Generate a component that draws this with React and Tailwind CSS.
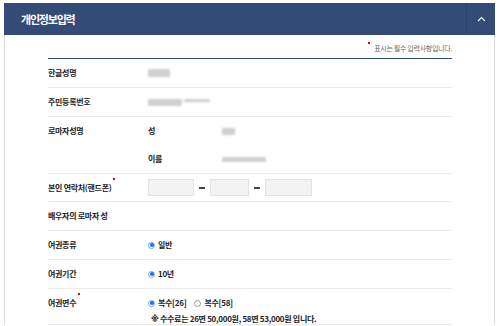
import React from 'react';

const Blur = ({ w, h = 7, className = '' }) => (
  <span
    className={`inline-block rounded-[1px] bg-[#cfcfcf] blur-[1.3px] ${className}`}
    style={{ width: w, height: h }}
  />
);

const Radio = ({ checked, label }) => (
  <span className="flex items-center gap-[3px]">
    {checked ? (
      <span className="flex h-[7px] w-[7px] items-center justify-center rounded-full border border-[#7aa6f2] bg-white">
        <span className="h-[4px] w-[4px] rounded-full bg-[#1a6ef0]" />
      </span>
    ) : (
      <span className="h-[7px] w-[7px] rounded-full border border-[#999] bg-white" />
    )}
    <span className="font-semibold leading-none">{label}</span>
  </span>
);

const Req = () => <span className="absolute -right-[4px] -top-[4px] h-[2px] w-[2px] bg-[#e60012]" />;

const Row = ({ label, required, children, className = 'h-[29px] items-center' }) => (
  <div className={`flex border-b border-[#ebebeb] ${className}`}>
    <div className="w-[100px] shrink-0 font-semibold leading-none text-[#222]">
      <span className="relative">
        {label}
        {required && <Req />}
      </span>
    </div>
    <div className="flex-1 leading-none text-[#222]">{children}</div>
  </div>
);

export default function App() {
  return (
    <div
      className="min-h-screen bg-white pl-[4px] pt-[3px] text-[8px] tracking-[-0.3px]"
      style={{ fontFamily: '"Noto Sans CJK KR", "Noto Sans", sans-serif' }}
    >
      <div className="w-[491px]">
        {/* Header */}
        <div className="flex h-[32px] items-center bg-[#344b78]">
          <h1 className="pl-[17px] text-[11px] font-bold tracking-[-1.2px] text-white">개인정보입력</h1>
          <div className="ml-auto h-full w-px bg-[#2d426b]" />
          <div className="flex w-[28px] items-center justify-center">
            <svg width="9" height="6" viewBox="0 0 9 6" fill="none">
              <path d="M1 5L4.5 1.5L8 5" stroke="white" strokeWidth="1.1" />
            </svg>
          </div>
        </div>

        {/* Body */}
        <div className="border-x border-[#dcdcdc] pl-[43px] pr-[42px]">
          <div className="flex h-[23px] items-end justify-end pb-[6px] text-[7px] leading-none text-[#666]">
            <span className="relative pl-[6px]">
              <span className="absolute left-0 top-[-3px] h-[2px] w-[2px] bg-[#e60012]" />
              표시는 필수 입력사항입니다.
            </span>
          </div>
          <div className="border-t border-[#344b78]" />

          <Row label="한글성명">
            <Blur w={22} h={8} />
          </Row>
          <Row label="주민등록번호">
            <span className="flex items-center gap-[2px]">
              <Blur w={34} h={7} />
              <Blur w={26} h={3} className="mb-[3px]" />
            </span>
          </Row>

          <div className="flex border-b border-[#ebebeb] leading-none">
            <div className="flex h-[28px] w-[100px] shrink-0 items-center font-semibold text-[#222]">로마자성명</div>
            <div className="flex-1 text-[#222]">
              <div className="flex h-[28px] items-center">
                <span className="w-[74px] font-semibold">성</span>
                <Blur w={13} h={7} />
              </div>
              <div className="flex h-[28px] items-center">
                <span className="w-[74px] font-semibold">이름</span>
                <Blur w={44} h={5} />
              </div>
            </div>
          </div>

          <Row label="본인 연락처(핸드폰)" required className="h-[28px] items-center">
            <div className="flex items-center">
              <span className="h-[17px] w-[46px] border border-[#e2e2e2] bg-[#f3f3f3]" />
              <span className="mx-[5px] h-[2px] w-[6px] bg-[#444]" />
              <span className="h-[17px] w-[39px] border border-[#e2e2e2] bg-[#f3f3f3]" />
              <span className="mx-[5px] h-[2px] w-[6px] bg-[#444]" />
              <span className="h-[17px] w-[47px] border border-[#e2e2e2] bg-[#f3f3f3]" />
            </div>
          </Row>

          <Row label="배우자의 로마자 성" />

          <Row label="여권종류">
            <Radio checked label="일반" />
          </Row>
          <Row label="여권기간">
            <Radio checked label="10년" />
          </Row>
          <Row label="여권면수" required className="h-[36px] items-start pt-[10px]">
            <div className="flex items-center gap-[8px]">
              <Radio checked label="복수[26]" />
              <Radio label="복수[58]" />
            </div>
            <p className="mt-[8px] pl-[3px] font-semibold">
              <span className="font-['DejaVu_Sans',sans-serif] text-[#222]">※</span> 수수료는 26면 50,000원, 58면 53,000원 입니다.
            </p>
          </Row>
        </div>
      </div>
    </div>
  );
}
